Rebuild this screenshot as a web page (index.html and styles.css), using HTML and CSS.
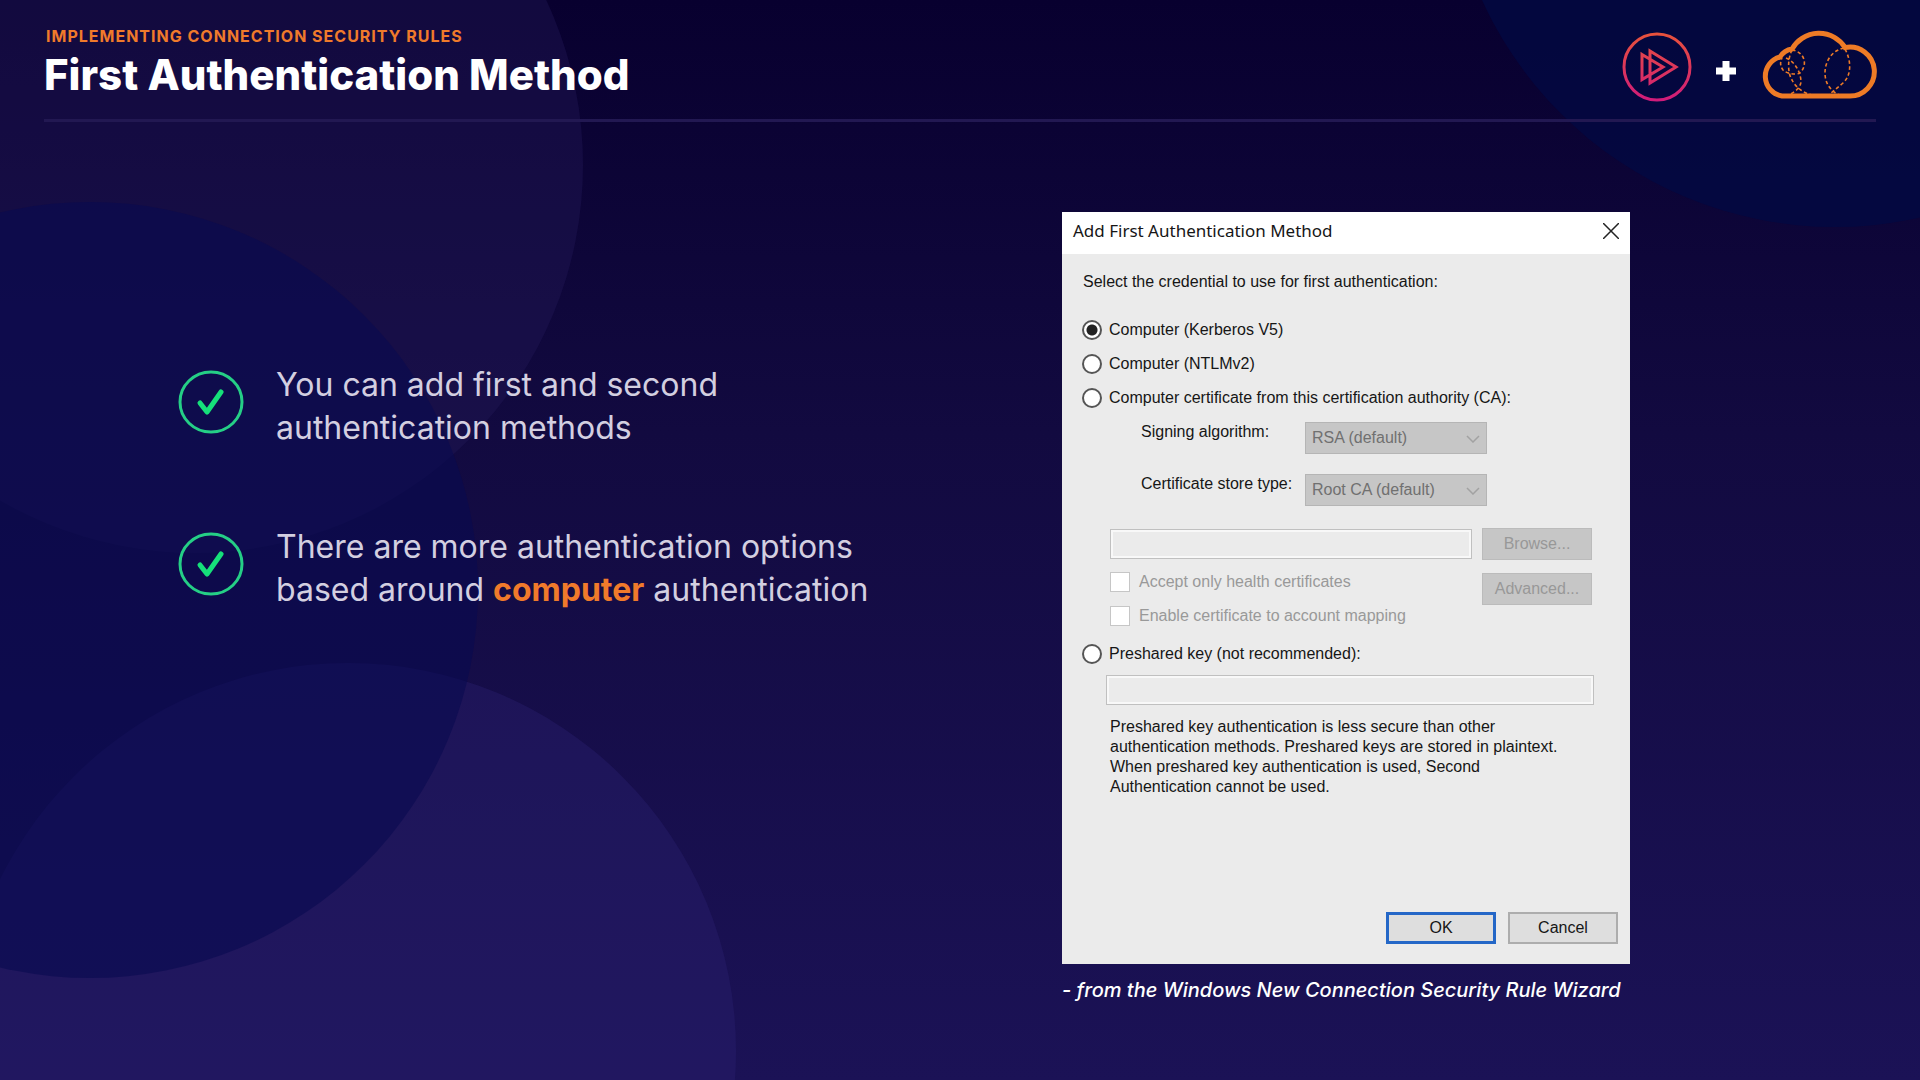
FILE: index.html
```html
<!DOCTYPE html>
<html lang="en">
<head>
<meta charset="utf-8">
<title>First Authentication Method</title>
<meta name="viewport" content="width=device-width, initial-scale=1">
<link rel="stylesheet" href="styles.css">
</head>
<body>
<svg class="backdrop" aria-hidden="true">
  <circle cx="195" cy="165" r="388" fill="#221a58" fill-opacity=".4"/>
  <circle cx="348" cy="1051" r="388" fill="#2a2070" fill-opacity=".4"/>
  <circle cx="90" cy="590" r="388" fill="#080a50" fill-opacity=".6"/>
  <circle cx="1835" cy="-161" r="388" fill="#020a44" fill-opacity=".7"/>
</svg>
<div class="slide">
  <header class="header">
    <div>
      <p class="eyebrow">Implementing Connection Security Rules</p>
      <h1 class="title">First Authentication Method</h1>
    </div>
    <div class="brands">
      <svg class="brand-play" viewBox="0 0 70 70" fill="none" role="img" aria-label="Play logo">
        <defs><linearGradient id="hot" x1="0" y1="0" x2="0" y2="70" gradientUnits="userSpaceOnUse"><stop offset="0" stop-color="#e8533a"/><stop offset="1" stop-color="#d01a7c"/></linearGradient></defs>
        <g stroke="url(#hot)" stroke-width="3"><circle cx="35" cy="35" r="33"/>
        <path d="M28 19 L54 35 L28 51 Z M20 22.500 L41 35 L20 47.500 Z"/></g>
      </svg>
      <svg class="brand-plus" viewBox="0 0 20 20" aria-hidden="true"><path d="M10 0V20M0 10H20" stroke="#fff" stroke-width="7"/></svg>
      <svg class="brand-cloud" viewBox="0 0 116 70" fill="none" stroke="#ee7b26" role="img" aria-label="Cloud logo">
        <path stroke-width="5" d="M22 64 H89 A24.500 24.500 0 1 0 85 15.500 A31 31 0 0 0 32 17 A17 17 0 0 0 20 25 A20 20 0 0 0 22 64 Z"/>
        <path stroke-width="1.600" stroke-dasharray="3.500 2.500" d="M32 18 C45 20 48 33 40 41 C37 43 27 42 23 38 C20 34 20 30 22 26 M32 18 C27 28 28 42 32 48 C36 56 46 63 54 63 M26 26 C36 30 41 42 41 50 C40 57 33 61 28 63 M84 16 C64 20 60 46 71 57 C74 61 78 62 81 64 M85 17 C92 30 91 44 83 51 C76 57 72 60 68 64"/>
      </svg>
    </div>
  </header>
  <main class="content">
    <ul class="points">
      <li class="point">
        <svg class="check" viewBox="0 0 66 64" fill="none" aria-hidden="true"><ellipse cx="33" cy="32" rx="31" ry="30" stroke="#25cf86" stroke-width="3"/><path d="M22 33 L29 42 L43 22" stroke="#16e07a" stroke-width="5" stroke-linecap="round" stroke-linejoin="round"/></svg>
        <p class="point-text">You can add first and second<br>authentication methods</p>
      </li>
      <li class="point">
        <svg class="check" viewBox="0 0 66 64" fill="none" aria-hidden="true"><ellipse cx="33" cy="32" rx="31" ry="30" stroke="#25cf86" stroke-width="3"/><path d="M22 33 L29 42 L43 22" stroke="#16e07a" stroke-width="5" stroke-linecap="round" stroke-linejoin="round"/></svg>
        <p class="point-text">There are more authentication options<br>based around <strong>computer</strong> authentication</p>
      </li>
    </ul>
    <figure class="figure">
      <form class="dialog">
        <div class="titlebar">
          <h2 class="dialog-title">Add First Authentication Method</h2>
          <button class="close" type="button" aria-label="Close"><svg viewBox="0 0 16 16" width="16" height="16" fill="none"><path d="M0 0L16 16M16 0L0 16" stroke="#222" stroke-width="1.500"/></svg></button>
        </div>
        <div class="dialog-body">
          <p class="prompt">Select the credential to use for first authentication:</p>
          <label class="option"><input class="radio" type="radio" name="method" checked>Computer (Kerberos V5)</label>
          <label class="option"><input class="radio" type="radio" name="method">Computer (NTLMv2)</label>
          <label class="option"><input class="radio" type="radio" name="method">Computer certificate from this certification authority (CA):</label>
          <div class="fields">
            <label for="alg">Signing algorithm:</label>
            <span class="select-wrap"><select id="alg" class="select" disabled><option>RSA (default)</option></select><svg class="chevron" viewBox="0 0 14 8" fill="none"><path d="M1 1L7 7L13 1" stroke="#a2a2a2" stroke-width="1.500"/></svg></span>
            <label for="store">Certificate store type:</label>
            <span class="select-wrap"><select id="store" class="select" disabled><option>Root CA (default)</option></select><svg class="chevron" viewBox="0 0 14 8" fill="none"><path d="M1 1L7 7L13 1" stroke="#a2a2a2" stroke-width="1.500"/></svg></span>
          </div>
          <div class="authority">
            <div class="authority-main">
              <input class="text" type="text" aria-label="Certification authority" disabled>
              <label class="tick"><input class="box" type="checkbox" disabled>Accept only health certificates</label>
              <label class="tick"><input class="box" type="checkbox" disabled>Enable certificate to account mapping</label>
            </div>
            <div class="authority-side">
              <button class="btn" type="button" disabled>Browse...</button>
              <button class="btn" type="button" disabled>Advanced...</button>
            </div>
          </div>
          <label class="option"><input class="radio" type="radio" name="method">Preshared key (not recommended):</label>
          <input class="text key" type="text" aria-label="Preshared key" disabled>
          <p class="note">Preshared key authentication is less secure than other<br>authentication methods. Preshared keys are stored in plaintext.<br>When preshared key authentication is used, Second<br>Authentication cannot be used.</p>
          <div class="actions">
            <button class="btn primary" type="button">OK</button>
            <button class="btn" type="button">Cancel</button>
          </div>
        </div>
      </form>
      <figcaption class="caption">- from the Windows New Connection Security Rule Wizard</figcaption>
    </figure>
  </main>
</div>
</body>
</html>
```
FILE: styles.css
```css
* { box-sizing: border-box; }
body {
  margin: 0;
  min-height: 100vh;
  background: linear-gradient(#08002f, #120a40 40%, #1b1256);
  color: #fff;
  font-family: Inter, "Liberation Sans", sans-serif;
}
h1, h2, p, ul, figure { margin: 0; padding: 0; }
.backdrop { position: absolute; inset: 0; width: 100%; height: 100%; z-index: -1; }
.slide { padding: 24px 44px; }
.header {
  display: flex;
  justify-content: space-between;
  align-items: flex-start;
  height: 98px;
  border-bottom: 3px solid #221852;
}
.eyebrow {
  padding-left: 2px;
  font-size: 16px;
  line-height: 24px;
  font-weight: 700;
  letter-spacing: 1px;
  text-transform: uppercase;
  color: #f07a2b;
}
.title { font-size: 42px; line-height: 53px; font-weight: 800; }
.brands { display: flex; align-items: center; gap: 24px; padding-top: 8px; }
.brand-play { width: 70px; height: 70px; }
.brand-plus { width: 20px; height: 20px; margin-top: 8px; }
.brand-cloud { width: 116px; height: 70px; overflow: visible; }
.content {
  display: grid;
  grid-template-columns: 1018fr 814fr;
  padding-top: 90px;
}
.points {
  display: flex;
  flex-direction: column;
  gap: 76px;
  padding: 151px 0 0 134px;
  list-style: none;
}
.point { display: flex; align-items: flex-start; gap: 32px; }
.check { flex: none; width: 66px; height: 64px; margin-top: 7px; }
.point-text { font-size: 32px; line-height: 43px; color: #d3cfe0; }
.point-text strong { font-weight: 700; color: #f07a2b; }
.figure { width: 568px; }
.dialog {
  display: block;
  background: #ebebeb;
  color: #161616;
  font: 16px/20px "Liberation Sans", sans-serif;
}
.titlebar {
  display: flex;
  justify-content: space-between;
  align-items: center;
  height: 42px;
  padding: 0 11px 4px 11px;
  background: #fff;
}
.dialog-title { font: 400 17px/24px "Noto Sans", sans-serif; }
.close { display: grid; padding: 0; border: 0; background: none; }
.dialog-body { padding: 18px 12px 20px 20px; }
.prompt { padding: 0 0 21px 1px; }
.option { display: flex; align-items: center; gap: 7px; height: 34px; }
.radio {
  appearance: none;
  width: 20px;
  height: 20px;
  margin: 0;
  border: 2px solid #555;
  border-radius: 50%;
  background: #fff;
}
.radio:checked { background: radial-gradient(#222 5px, #fff 6px); }
.fields {
  display: grid;
  grid-template-columns: 164px 182px;
  row-gap: 20px;
  padding: 7px 0 0 59px;
}
.select-wrap { position: relative; display: block; }
.select {
  appearance: none;
  display: block;
  width: 100%;
  height: 32px;
  padding: 0 6px;
  border: 1px solid #b5b5b5;
  border-radius: 0;
  background: #c6c6c6;
  color: #707070;
  opacity: 1;
  font: inherit;
}
.chevron { position: absolute; right: 7px; top: 13px; width: 14px; height: 8px; }
.authority { display: flex; gap: 10px; padding: 22px 0 4px 28px; }
.authority-main { flex: none; width: 362px; }
.authority-side { display: flex; flex-direction: column; gap: 13px; }
.text {
  display: block;
  width: 100%;
  height: 30px;
  margin: 1px 0 6px;
  border: 1px solid #c0c0c0;
  background: #ebebeb;
  box-shadow: inset 0 0 0 2px #f8f8f8;
}
.tick { display: flex; align-items: center; gap: 9px; height: 34px; color: #999; }
.box { appearance: none; width: 20px; height: 20px; margin: 0; border: 1px solid #c6c6c6; background: #fff; }
.btn {
  width: 110px;
  height: 32px;
  padding: 0;
  border: 2px solid #adadad;
  background: #dedede;
  color: #161616;
  font: inherit;
}
.btn:disabled { border: 1px solid #bbb; background: #c6c6c6; color: #989898; }
.btn.primary { border: 3px solid #2467c7; }
.key { width: 488px; margin: 4px 0 12px 24px; }
.note { padding-left: 28px; }
.actions { display: flex; justify-content: flex-end; gap: 12px; padding-top: 115px; }
.caption { padding-top: 12px; font-size: 20px; line-height: 28px; font-style: italic; font-weight: 500; white-space: nowrap; }
```
